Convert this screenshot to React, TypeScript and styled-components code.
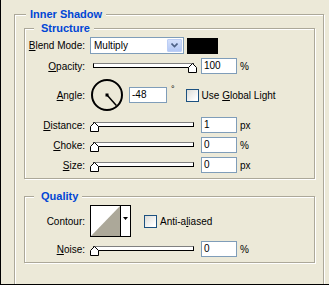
import styled, { createGlobalStyle } from 'styled-components';

const GlobalStyle = createGlobalStyle`
  html, body {
    margin: 0;
    padding: 0;
    background: #ece9d8;
  }
  body {
    font-family: "Liberation Sans", Arial, sans-serif;
    font-size: 10px;
    color: #000;
  }
`;

const Frame = styled.div`
  width: 328px;
  height: 284px;
  border-left: 1px solid #000;
  border-bottom: 1px solid #000;
  background: #ece9d8;
  overflow: hidden;
`;

const Group = styled.fieldset`
  box-sizing: border-box;
  margin: 0;
  min-width: 0;
  border: 1px solid #aca899;
  box-shadow: inset 1px 1px 0 #fff, 1px 1px 0 #fff;
`;

const OuterGroup = styled(Group)`
  width: 310px;
  height: 300px;
  margin: 7px 0 0 13px;
  padding: 0 8px 0 9px;
`;

const InnerGroup = styled(Group)<{ $gap?: number }>`
  width: 291px;
  margin-top: ${p => p.$gap ?? 0}px;
  padding: 2px 0 5px;
  display: flex;
  flex-direction: column;
  gap: 4px;
`;

const Legend = styled.legend<{ $outer?: boolean }>`
  font-weight: bold;
  font-size: 11px;
  color: #0046d5;
  background: #ece9d8;
  line-height: ${p => (p.$outer ? 15 : 13)}px;
  padding: ${p => (p.$outer ? '0 4px' : '0 4px 0 7px')};
  margin-left: ${p => (p.$outer ? 2 : 9)}px;
`;

const Row = styled.div<{ $h: number; $mt?: number }>`
  display: grid;
  grid-template-columns: 60px auto;
  column-gap: 5px;
  align-items: center;
  height: ${p => p.$h}px;
  margin-top: ${p => p.$mt ?? 0}px;
`;

const Label = styled.div`
  text-align: right;
  white-space: nowrap;
`;

const Controls = styled.div`
  display: flex;
  align-items: center;
  height: 100%;
`;

const Select = styled.div`
  box-sizing: border-box;
  width: 94px;
  height: 17px;
  border: 1px solid #7f9db9;
  background: #fff;
  display: flex;
  align-items: center;
  justify-content: space-between;
  padding-left: 3px;
`;

const DropButton = styled.div`
  box-sizing: border-box;
  width: 15px;
  height: 13px;
  margin-right: 1px;
  border: 1px solid #bccef5;
  border-radius: 1px;
  background: linear-gradient(#d4e0fb, #b3c8f5);
  display: flex;
  align-items: center;
  justify-content: center;
`;

const Swatch = styled.div`
  width: 31px;
  height: 16px;
  margin-left: 3px;
  background: #000;
`;

const SliderBox = styled.div`
  position: relative;
  width: 107px;
  height: 16px;
`;

const Track = styled.div`
  box-sizing: border-box;
  height: 5px;
  margin: 5px 3px 0;
  border: 1px solid #000;
  border-top-color: #808080;
  background: #fff;
`;

const Thumb = styled.svg`
  position: absolute;
  top: 5px;
  display: block;
`;

const Field = styled.div<{ $w?: number }>`
  box-sizing: border-box;
  width: ${p => p.$w ?? 36}px;
  height: 16px;
  margin-left: ${p => (p.$w ? 5 : 4)}px;
  border: 1px solid #7f9db9;
  background: #fff;
  padding-left: 2px;
  line-height: 14px;
`;

const Unit = styled.span`
  margin-left: 3px;
`;

const Degree = styled.span`
  align-self: flex-start;
  margin: 6px 0 0 4px;
  font-size: 9px;
`;

const CheckWrap = styled.label<{ $ml: number }>`
  display: flex;
  align-items: center;
  gap: 3px;
  margin-left: ${p => p.$ml}px;
`;

const CheckText = styled.span`
  white-space: nowrap;
`;

const CheckBox = styled.span`
  box-sizing: border-box;
  width: 13px;
  height: 13px;
  border: 1px solid #1c5180;
  background: linear-gradient(135deg, #dcdcd7 0%, #fff 85%);
`;

const Dial = styled.svg`
  display: block;
`;

const ContourBox = styled.div`
  box-sizing: border-box;
  width: 41px;
  height: 32px;
  border: 1px solid #000;
  background: #fff;
  display: flex;
`;

const ContourPreview = styled.svg`
  display: block;
  border-right: 1px solid #000;
`;

const ContourArrow = styled.div`
  flex: 1;
  display: flex;
  justify-content: center;
  padding-top: 11px;
`;

function Slider({ value }: { value: number }) {
  return (
    <SliderBox>
      <Track />
      <Thumb width="9" height="10" viewBox="0 0 9 10" style={{ left: `${value * 0.98}px` }}>
        <polygon points="0.5,4.5 4.5,0.5 8.5,4.5 8.5,9.5 0.5,9.5" fill="#fff" stroke="#000" />
      </Thumb>
    </SliderBox>
  );
}

type SliderRowProps = {
  label: React.ReactNode;
  value: number;
  field: string;
  unit: string;
  mt?: number;
};

function SliderRow({ label, value, field, unit, mt }: SliderRowProps) {
  return (
    <Row $h={16} $mt={mt}>
      <Label>{label}</Label>
      <Controls>
        <Slider value={value} />
        <Field>{field}</Field>
        <Unit>{unit}</Unit>
      </Controls>
    </Row>
  );
}

const angle = (-48 * Math.PI) / 180;

export default function App() {
  return (
    <Frame>
      <GlobalStyle />
      <OuterGroup>
        <Legend $outer>Inner Shadow</Legend>
        <InnerGroup>
          <Legend>Structure</Legend>
          <Row $h={17}>
            <Label><u>B</u>lend Mode:</Label>
            <Controls>
              <Select>
                Multiply
                <DropButton>
                  <svg width="7" height="5" viewBox="0 0 7 5">
                    <polyline points="0.5,0.5 3.5,3.5 6.5,0.5" fill="none" stroke="#4d6185" strokeWidth="1.6" />
                  </svg>
                </DropButton>
              </Select>
              <Swatch />
            </Controls>
          </Row>
          <SliderRow label={<><u>O</u>pacity:</>} value={100} field="100" unit="%" />
          <Row $h={34}>
            <Label><u>A</u>ngle:</Label>
            <Controls>
              <Dial width="34" height="34" viewBox="0 0 34 34">
                <circle cx="17" cy="17" r="15" fill="none" stroke="#000" strokeWidth="2" />
                <rect x="15.5" y="15.5" width="3" height="3" fill="#000" />
                <line
                  x1="17"
                  y1="17"
                  x2={17 + 14 * Math.cos(angle)}
                  y2={17 - 14 * Math.sin(angle)}
                  stroke="#000"
                  strokeWidth="1.5"
                />
              </Dial>
              <Field $w={38}>-48</Field>
              <Degree>°</Degree>
              <CheckWrap $ml={11}>
                <CheckBox />
                <CheckText>Use <u>G</u>lobal Light</CheckText>
              </CheckWrap>
            </Controls>
          </Row>
          <SliderRow label={<><u>D</u>istance:</>} value={0} field="1" unit="px" mt={1} />
          <SliderRow label={<><u>C</u>hoke:</>} value={0} field="0" unit="%" />
          <SliderRow label={<><u>S</u>ize:</>} value={0} field="0" unit="px" />
        </InnerGroup>
        <InnerGroup $gap={11}>
          <Legend>Quality</Legend>
          <Row $h={32}>
            <Label>Contour:</Label>
            <Controls>
              <ContourBox>
                <ContourPreview width="29" height="30" viewBox="0 0 29 30">
                  <polygon points="0,30 29,0 29,30" fill="#aca899" />
                </ContourPreview>
                <ContourArrow>
                  <svg width="5" height="3" viewBox="0 0 5 3">
                    <polygon points="0,0 5,0 2.5,3" fill="#000" />
                  </svg>
                </ContourArrow>
              </ContourBox>
              <CheckWrap $ml={13}>
                <CheckBox />
                <CheckText>Anti-a<u>l</u>iased</CheckText>
              </CheckWrap>
            </Controls>
          </Row>
          <SliderRow label={<><u>N</u>oise:</>} value={0} field="0" unit="%" />
        </InnerGroup>
      </OuterGroup>
    </Frame>
  );
}
